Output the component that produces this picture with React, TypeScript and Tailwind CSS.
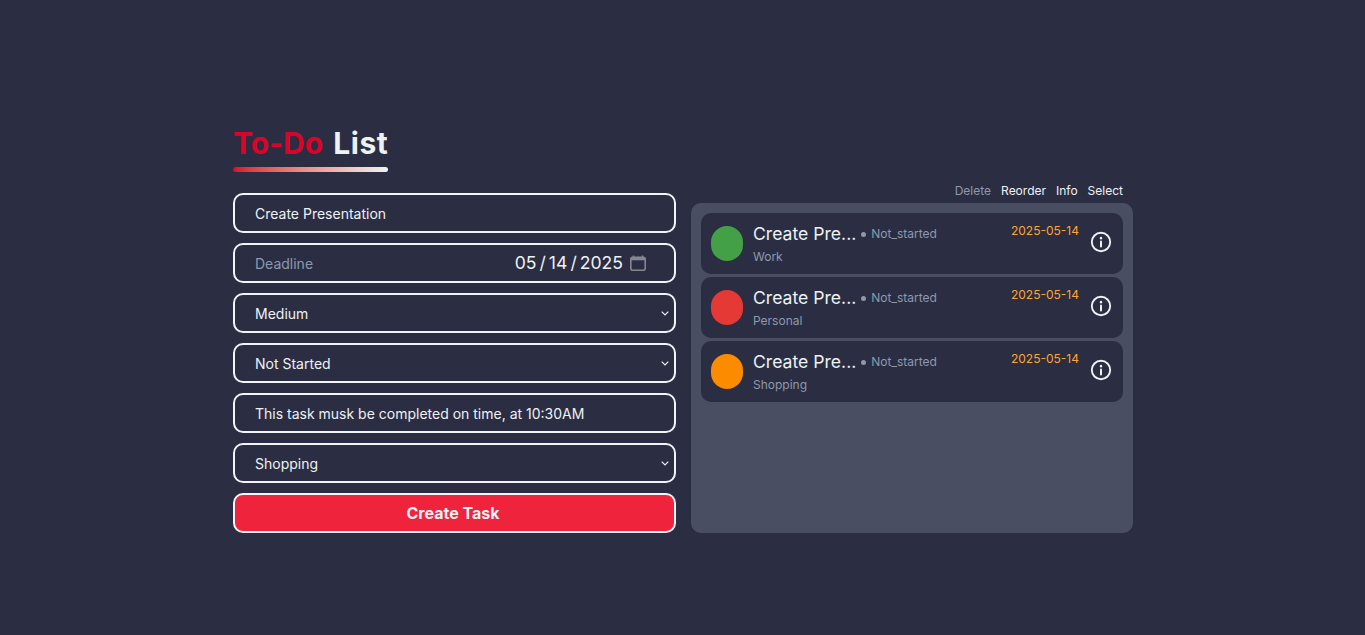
import React from "react";

const tasks = [
  { color: "bg-[#43a047]", cat: "Work" },
  { color: "bg-[#e53935]", cat: "Personal" },
  { color: "bg-[#fb8c00]", cat: "Shopping" },
];

const field =
  "w-full h-10 rounded-[10px] border-2 border-[#f1f5f9] bg-[#2b2d42] pl-5 pr-2 text-[14px] text-[#edf2f4] outline-none";

function Chevron() {
  return (
    <svg className="absolute right-[7px] top-[18px] pointer-events-none" width="8" height="5" viewBox="0 0 8 5" fill="none" stroke="#edf2f4" strokeWidth="1.2">
      <path d="M0.7 0.7 4 4 7.3 0.7" />
    </svg>
  );
}

function Select({ value, options }: { value: string; options: string[] }) {
  return (
    <div className="relative">
      <select className={field + " appearance-none"} defaultValue={value}>
        {options.map((o) => (
          <option key={o}>{o}</option>
        ))}
      </select>
      <Chevron />
    </div>
  );
}

function Info() {
  return (
    <svg width="22" height="22" viewBox="0 0 22 22" fill="none" stroke="#edf2f4" strokeWidth="1.9" strokeLinecap="round">
      <circle cx="11" cy="11" r="9.2" />
      <path d="M11 10.5v5" strokeWidth="2" />
      <path d="M11 7v.2" strokeWidth="2.4" />
    </svg>
  );
}

function Calendar() {
  return (
    <svg width="16" height="16" viewBox="0 0 16 16" fill="none">
      <path d="M3.5 0.5v2M12.5 0.5v2" stroke="#85878f" strokeWidth="1.6" />
      <rect x="0.8" y="2.3" width="14.4" height="12.9" rx="2" stroke="#85878f" strokeWidth="1.6" />
      <rect x="1" y="2.5" width="14" height="2.8" fill="#85878f" />
    </svg>
  );
}

export default function App() {
  return (
    <div
      className="min-h-[635px] h-screen bg-[#2b2d42] flex justify-center pl-px pt-[125px] overflow-hidden"
      style={{ fontFamily: "Inter, 'Liberation Sans', sans-serif" }}
    >
      <div className="w-[900px] flex flex-col">
        <div className="flex h-[47px]">
          <h1 className="relative h-[47px] text-[30px] leading-[36px] font-bold text-[#edf2f4] pb-[11px]">
            <span className="text-[#d90429]">To-Do</span> <span className="ml-[3px] tracking-[0.5px]">List</span>
            <span className="absolute left-0 right-0 bottom-0 h-[5px] rounded-full bg-gradient-to-r from-[#d90429] to-[#edf2f4]" />
          </h1>
        </div>
        <div className="flex gap-[15px] mt-[21px]">
          <form className="w-[443px] flex flex-col gap-[10px]">
            <input className={field} defaultValue="Create Presentation" />
            <div className={field + " flex items-center justify-between !pr-[28px]"}>
              <span className="text-[#8d99ae] pt-px">Deadline</span>
              <div className="flex items-center gap-[7px]">
                <span className="text-[17.6px] text-[#edf2f4] pt-px">
                  05<span className="mx-[3px]">/</span>14<span className="mx-[3px]">/</span>2025
                </span>
                <Calendar />
              </div>
            </div>
            <Select value="Medium" options={["Low", "Medium", "High"]} />
            <Select value="Not Started" options={["Not Started", "In Progress", "Completed"]} />
            <input className={field} defaultValue="This task musk be completed on time, at 10:30AM" />
            <Select value="Shopping" options={["Work", "Personal", "Shopping"]} />
            <button
              type="button"
              className="w-full h-10 rounded-[10px] border-2 border-[#f1f5f9] bg-[#ef233c] pr-[3px] text-[16px] font-bold text-[#edf2f4]"
            >
              Create Task
            </button>
          </form>
          <div className="w-[442px] -mt-[10px] flex flex-col">
            <div className="h-[20px] flex justify-end items-start gap-[10px] pr-[10px] text-[12px] leading-[15px] text-[#edf2f4]">
              <span className="text-[#8d99ae]">Delete</span>
              <span>Reorder</span>
              <span>Info</span>
              <span>Select</span>
            </div>
            <div className="h-[330px] rounded-[10px] bg-[#4a4e63] p-[10px] flex flex-col gap-[3px]">
              {tasks.map((t) => (
                <div key={t.cat} className="h-[61px] rounded-[10px] bg-[#2b2d42] flex items-center pl-[10px] pr-[11px]">
                  <div className={"w-8 h-[35px] rounded-full shrink-0 " + t.color} />
                  <div className="ml-[10px] flex-1 min-w-0">
                    <div className="flex items-center h-[24px]">
                      <span className="text-[17.6px] leading-[24px] text-[#edf2f4]">Create Pre...</span>
                      <span className="ml-[5px] w-[5px] h-[5px] rounded-full bg-[#8d99ae]" />
                      <span className="ml-[5px] text-[12px] leading-[24px] text-[#8d99ae]">Not_started</span>
                    </div>
                    <div className="text-[12px] leading-[16px] mt-[3px] text-[#8d99ae]">{t.cat}</div>
                  </div>
                  <div className="self-start mt-[10px] text-[12px] leading-[16px] text-[#ffa630]">2025-05-14</div>
                  <div className="ml-[11px] mb-[3px]"><Info /></div>
                </div>
              ))}
            </div>
          </div>
        </div>
      </div>
    </div>
  );
}
